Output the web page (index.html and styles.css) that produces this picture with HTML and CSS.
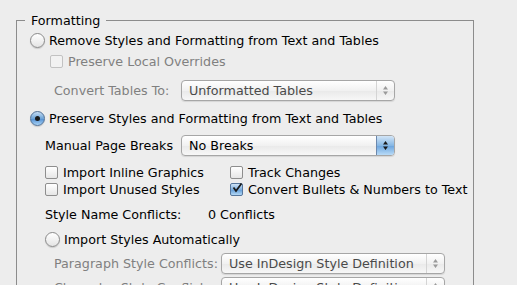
FILE: index.html
```html
<!DOCTYPE html>
<html lang="en">
<head>
  <meta charset="UTF-8">
  <title>Import Options</title>
  <link rel="stylesheet" href="styles.css">
</head>
<body>

  <fieldset class="group">
    <legend>Formatting</legend>

    <div class="row r-remove">
      <span class="radio"></span>
      <span>Remove Styles and Formatting from Text and Tables</span>
    </div>

    <div class="row r-local dim">
      <span class="check"></span>
      <span>Preserve Local Overrides</span>
    </div>

    <div class="row r-tables dim">
      <span class="label l-tables">Convert Tables To:</span>
      <div class="popup">
        <span class="popup-text">Unformatted Tables</span>
        <span class="arrows"><svg width="7" height="11" viewBox="0 0 7 11"><path d="M3.5 1 L6 4.5 H1 Z M3.5 10 L6 6.5 H1 Z" fill="#9a9a9a"/></svg></span>
      </div>
    </div>

    <div class="row r-preserve">
      <span class="radio on"></span>
      <span>Preserve Styles and Formatting from Text and Tables</span>
    </div>

    <div class="row r-breaks">
      <span class="label l-breaks">Manual Page Breaks</span>
      <div class="popup active">
        <span class="popup-text">No Breaks</span>
        <span class="arrows"><svg width="7" height="11" viewBox="0 0 7 11"><path d="M3.5 1 L6 4.5 H1 Z M3.5 10 L6 6.5 H1 Z" fill="#1a1a1a"/></svg></span>
      </div>
    </div>

    <div class="grid">
      <div class="cell"><span class="check"></span>Import Inline Graphics</div>
      <div class="cell"><span class="check"></span>Track Changes</div>
      <div class="cell"><span class="check"></span>Import Unused Styles</div>
      <div class="cell"><span class="check on"><svg width="12" height="12" viewBox="0 0 12 12"><path d="M2.5 5.5 L5 9 L10.5 1.5" fill="none" stroke="#1a1a1a" stroke-width="1.8"/></svg></span>Convert Bullets &amp; Numbers to Text</div>
    </div>

    <div class="row r-names">
      <span class="label l-names">Style Name Conflicts:</span>
      <span>0 Conflicts</span>
    </div>

    <div class="row r-auto">
      <span class="radio"></span>
      <span>Import Styles Automatically</span>
    </div>

    <div class="row r-para dim">
      <span class="label l-para">Paragraph Style Conflicts:</span>
      <div class="popup wide">
        <span class="popup-text">Use InDesign Style Definition</span>
        <span class="arrows"><svg width="7" height="11" viewBox="0 0 7 11"><path d="M3.5 1 L6 4.5 H1 Z M3.5 10 L6 6.5 H1 Z" fill="#9a9a9a"/></svg></span>
      </div>
    </div>

    <div class="row r-char dim">
      <span class="label l-para">Character Style Conflicts:</span>
      <div class="popup wide">
        <span class="popup-text">Use InDesign Style Definition</span>
        <span class="arrows"><svg width="7" height="11" viewBox="0 0 7 11"><path d="M3.5 1 L6 4.5 H1 Z M3.5 10 L6 6.5 H1 Z" fill="#9a9a9a"/></svg></span>
      </div>
    </div>
  </fieldset>

</body>
</html>
```

FILE: styles.css
```css
body {
  background-color: #ededed;
  color: #000;
  font-family: "DejaVu Sans", sans-serif;
  font-size: 12.7px;
  margin: 0;
  padding: 0;
  overflow: hidden;
}

.group {
  margin: 13px 0 0 16px;
  width: 456px;
  padding: 1px 0 0 0;
  border: 1px solid #8c8c8c;
  min-height: 300px;
}

.group legend {
  margin-left: 8px;
  padding: 0 6px;
  line-height: 15px;
}

.row {
  display: flex;
  align-items: center;
  height: 22px;
  padding-left: 13px;
}

.dim {
  color: #808080;
}

.r-local { height: 21px; padding-left: 33px; }
.r-tables { margin-top: 7px; padding-left: 37px; }
.r-preserve { margin-top: 6px; }
.r-breaks { margin-top: 5px; padding-left: 28px; }
.r-names { margin-top: 6px; height: 20px; padding-left: 28px; }
.r-auto { margin-top: 4px; padding-left: 28px; }
.r-para { margin-top: 2px; padding-left: 37px; }
.r-char { margin-top: 2px; padding-left: 37px; }

.label { flex: none; }
.l-tables { width: 127px; }
.l-breaks { width: 136px; }
.l-names { width: 163px; }
.l-para { width: 167px; }

/* radio buttons */
.radio {
  flex: none;
  width: 13px;
  height: 13px;
  border: 1px solid #8a8a8a;
  border-radius: 50%;
  background: linear-gradient(#ffffff, #e4e4e4);
  box-shadow: 0 1px 1px rgba(0,0,0,0.15);
  margin-right: 4px;
  position: relative;
}

.radio.on {
  border-color: #4f6f95;
  background: linear-gradient(#c5dcf3, #6ea4d8 50%, #4f8cd0 51%, #a8d2f5);
}

.radio.on::after {
  content: "";
  position: absolute;
  left: 4px;
  top: 4px;
  width: 5px;
  height: 5px;
  border-radius: 50%;
  background: #1a1a1a;
}

/* checkboxes */
.check {
  flex: none;
  width: 11px;
  height: 11px;
  border: 1px solid #8e8e8e;
  border-radius: 2px;
  background: linear-gradient(#ffffff, #e6e6e6);
  margin-right: 5px;
  position: relative;
}

.dim .check {
  border-color: #c2c2c2;
  background: #f2f2f2;
}

.check.on {
  border-color: #56769c;
  background: linear-gradient(#cfe3f6, #7fb0df 50%, #5f9ad6 51%, #b3d8f6);
}

.check svg {
  position: absolute;
  left: 0;
  top: -2px;
}

.grid {
  display: grid;
  grid-template-columns: 185px auto;
  grid-auto-rows: 17px;
  margin-top: 8px;
  padding-left: 28px;
}

.cell {
  display: flex;
  align-items: center;
}

/* popup menus */
.popup {
  flex: none;
  display: flex;
  align-items: center;
  width: 212px;
  height: 19px;
  border: 1px solid #a6a6a6;
  border-radius: 4px;
  background: linear-gradient(#ffffff, #f1f1f1 50%, #e9e9e9 51%, #f7f7f7);
  box-shadow: 0 1px 1px rgba(0,0,0,0.1);
}

.popup.wide { width: 222px; }

.popup-text {
  flex: 1;
  padding-left: 7px;
  color: #4a4a4a;
}

.popup.active .popup-text { color: #000; }

.arrows {
  flex: none;
  width: 17px;
  height: 19px;
  display: flex;
  align-items: center;
  justify-content: center;
  border-left: 1px solid #d4d4d4;
}

.popup.active .arrows {
  border-left-color: #6c88ad;
  border-radius: 0 3px 3px 0;
  background: linear-gradient(#d2e5f7, #86b7e4 50%, #6aa3dd 51%, #b9dbf7);
}
```
